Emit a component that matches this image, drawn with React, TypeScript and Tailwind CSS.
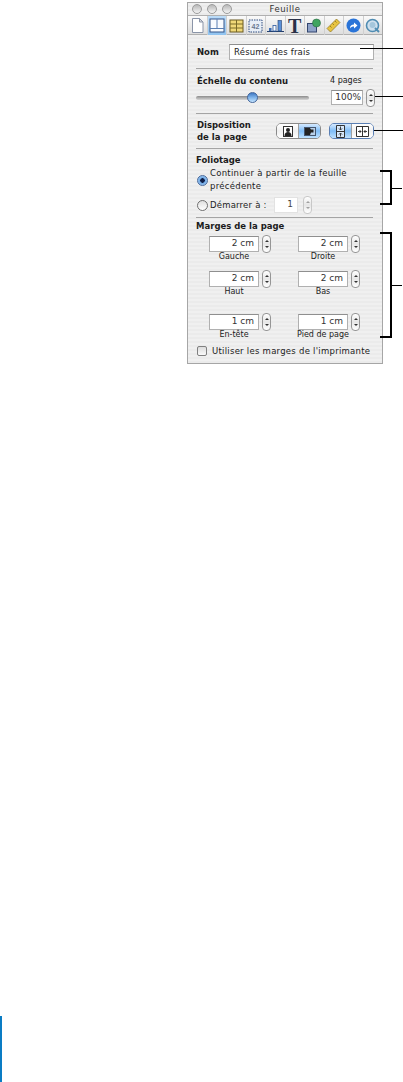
import React from "react";

const stripes =
  "bg-[repeating-linear-gradient(180deg,#f0f0f0_0px,#f0f0f0_2px,#ebebeb_2px,#ebebeb_4px)]";

function Sep() {
  return <div className="h-px w-[177px] bg-[#a4a4a4]" />;
}

function Stepper({ faded = false, className = "" }: { faded?: boolean; className?: string }) {
  const c = faded ? "#a0a0a0" : "#333333";
  return (
    <div
      className={`flex h-[18px] w-[9px] shrink-0 flex-col items-center justify-center gap-[4px] rounded-[4px] border bg-gradient-to-b from-[#ffffff] via-[#e6e6e6] to-[#ffffff] ${
        faded ? "border-[#c8c8c8]" : "border-[#969696]"
      } ${className}`}
    >
      <svg width="4" height="2" viewBox="0 0 4 2"><path d="M2 0L4 2H0z" fill={c} /></svg>
      <svg width="4" height="2" viewBox="0 0 4 2"><path d="M0 0h4L2 2z" fill={c} /></svg>
    </div>
  );
}

function Field({ value, className = "" }: { value: string; className?: string }) {
  return (
    <div
      className={`flex items-center justify-end border border-[#b0b0b0] border-t-[#8f8f8f] bg-white pr-[4px] text-[9px] text-[#333] ${className}`}
    >
      {value}
    </div>
  );
}

function Margin({ value, label }: { value: string; label: string }) {
  return (
    <div className="grid grid-cols-[50px_9px] items-center gap-x-[3px]">
      <Field value={value} className="h-[16px] w-[50px]" />
      <Stepper />
      <div className="mt-[-1px] flex h-[10px] w-[50px] justify-center text-[8px] leading-[10px] whitespace-nowrap text-[#222]">
        {label}
      </div>
    </div>
  );
}

function Cell({ children, active = false }: { children: React.ReactNode; active?: boolean }) {
  return (
    <div
      className={`flex h-[19px] w-[19.5px] items-center justify-center border-r border-[#cfcfcf] ${
        active ? "bg-gradient-to-b from-[#bcdcf8] to-[#8fc3f0]" : ""
      }`}
    >
      {children}
    </div>
  );
}

function Seg({ children, active = false, border = false }: { children: React.ReactNode; active?: boolean; border?: boolean }) {
  return (
    <div
      className={`flex h-full flex-1 items-center justify-center ${border ? "border-r border-[#a0a0a0]" : ""} ${
        active
          ? "bg-gradient-to-b from-[#d4e9ff] via-[#7fbcf6] to-[#bfe2ff]"
          : "bg-gradient-to-b from-[#ffffff] via-[#f0f0f0] to-[#ffffff]"
      }`}
    >
      {children}
    </div>
  );
}

function Light() {
  return (
    <div className="h-[10px] w-[10px] rounded-full border border-[#9c9c9c] bg-gradient-to-b from-[#b8b8b8] to-[#f4f4f4]" />
  );
}

function Bracket({ className }: { className: string }) {
  return (
    <div className={`absolute left-[380px] w-[12px] border-y-2 border-r-2 border-black ${className}`}>
      <div className="absolute top-1/2 left-[11px] h-px w-[11px] bg-black" />
    </div>
  );
}

export default function App() {
  return (
    <div className="relative h-[1082px] w-[403px] overflow-hidden bg-white pt-[2px] pl-[187px] font-['DejaVu_Sans',sans-serif] text-[8.5px] text-[#1c1c1c]">
      <div className="flex w-[196px] flex-col border border-[#a6a6a6]">
        <div className={`relative flex h-[12px] items-center justify-center ${stripes}`}>
          <div className="absolute top-[1px] left-[4px] flex gap-[5px]">
            <Light />
            <Light />
            <Light />
          </div>
          <span className="text-[8.5px] leading-none tracking-[.5px] text-[#333]">Feuille</span>
        </div>
        <div className="flex h-[20px] border-y border-[#b0b0b0] bg-gradient-to-b from-[#fafafa] to-[#dedede] leading-none">
          <Cell>
            <svg width="15" height="17" viewBox="0 0 15 17">
              <path d="M2.5 1.5h7l3.5 3.5v10.500h-10.500z" fill="#fff" stroke="#8b95a8" />
              <path d="M9.500 1.500v3.500h3.500z" fill="#d5d8de" stroke="#8b95a8" />
            </svg>
          </Cell>
          <Cell active>
            <svg width="16" height="15" viewBox="0 0 16 15">
              <rect x="1" y="1" width="14" height="13" fill="#f8fbff" stroke="#34558a" />
              <path d="M1 10.500h14M8 1v9.500" stroke="#5b7fb3" />
            </svg>
          </Cell>
          <Cell>
            <svg width="15" height="14" viewBox="0 0 15 14">
              <rect x="1" y="1" width="13" height="12" fill="#f0d878" stroke="#6a5a20" />
              <path d="M1 5h13M1 9h13M7.500 1v12" stroke="#7a6a28" />
            </svg>
          </Cell>
          <Cell>
            <svg width="15" height="14" viewBox="0 0 15 14">
              <rect x="1" y="1" width="13" height="12" fill="#e8eef6" stroke="#2f4d80" strokeDasharray="1.500 1" />
              <text x="7.500" y="9.500" textAnchor="middle" fontSize="7" fontWeight="700" fontFamily="'Liberation Sans',sans-serif" fill="#6a7890">42</text>
            </svg>
          </Cell>
          <Cell>
            <svg width="17" height="14" viewBox="0 0 17 14">
              <path d="M0 12.500h17" stroke="#24406e" />
              <rect x="2" y="9" width="2.500" height="3" fill="#3c6cb4" />
              <rect x="6" y="6.500" width="3" height="5.500" fill="#fff" stroke="#2c5aa0" strokeWidth=".8" />
              <rect x="11" y="1.500" width="3.500" height="10.500" fill="#5a90d8" stroke="#24406e" strokeWidth=".6" />
            </svg>
          </Cell>
          <Cell>
            <span className="font-['Liberation_Serif',serif] text-[20px] leading-none font-bold text-[#2a3148]">T</span>
          </Cell>
          <Cell>
            <svg width="16" height="15" viewBox="0 0 16 15">
              <rect x="1.500" y="5.500" width="9" height="8.500" fill="#8ea2c8" stroke="#32456e" />
              <circle cx="10.500" cy="5" r="4" fill="#3fa560" stroke="#2a6a42" strokeWidth=".6" />
            </svg>
          </Cell>
          <Cell>
            <svg width="15" height="15" viewBox="0 0 15 15">
              <path d="M1 10.500L10.500 1l3.500 3.500L4.500 14z" fill="#e8c440" stroke="#8d7420" strokeWidth=".7" />
              <path d="M4 8l1.500 1.500M6.500 5.500L8 7M9 3l1.500 1.500" stroke="#7a6418" strokeWidth=".7" />
            </svg>
          </Cell>
          <Cell>
            <svg width="15" height="15" viewBox="0 0 15 15">
              <circle cx="7.500" cy="7.500" r="7" fill="#2a74d8" />
              <path d="M4 10.500c0-3 1.500-4 4-4V4.500l3.500 3-3.500 3V8.500c-1.800 0-3 .4-4 2z" fill="#fff" />
            </svg>
          </Cell>
          <div className="flex h-[19px] flex-1 items-center justify-center">
            <svg width="16" height="16" viewBox="0 0 16 16">
              <circle cx="7.500" cy="7.500" r="6" fill="#cfe0ee" stroke="#4f8cb2" strokeWidth="1.600" />
              <circle cx="7.500" cy="7" r="3" fill="#a4c6dc" />
              <path d="M10 10l4 4" stroke="#4f8cb2" strokeWidth="2" />
            </svg>
          </div>
        </div>

        <div className={`flex flex-col pb-[7px] pl-[8px] ${stripes}`}>
          <div className="mt-[9px] flex h-[16px] items-center">
            <span className="w-[33px] pl-[1px] font-bold">Nom</span>
            <div className="flex h-[16px] w-[145px] items-center border border-[#b0b0b0] border-t-[#8f8f8f] bg-white pl-[4px] tracking-[.2px] text-[#222]">
              Résumé des frais
            </div>
          </div>
          <div className="mt-[8px]"><Sep /></div>

          <div className="mt-[7px] flex h-[10px] items-center leading-[10px]">
            <span className="w-[134px] pl-[1px] font-bold whitespace-nowrap">Échelle du contenu</span>
            <span className="text-[8px] whitespace-nowrap">4 pages</span>
          </div>
          <div className="mt-[4px] flex h-[15px] items-center">
            <div className="relative h-[4px] w-[113px] rounded-full bg-gradient-to-b from-[#8c8c8c] to-[#d8d8d8]">
              <div className="absolute top-[-3.500px] left-[51px] h-[11px] w-[11px] rounded-full border border-[#44679c] bg-gradient-to-b from-[#3f78c4] via-[#7fb4ea] to-[#c4e4ff]" />
            </div>
            <Field value="100%" className="ml-[22px] h-[15px] w-[32px] !pr-[1px]" />
            <Stepper className="ml-[3px]" />
          </div>
          <div className="mt-[8px]"><Sep /></div>

          <div className="mt-[5px] flex h-[24px] items-center">
            <div className="w-[80px] pl-[1px] leading-[12px] font-bold">
              Disposition
              <br />
              de la page
            </div>
            <div className="flex h-[16px] w-[45px] overflow-hidden rounded-[5px] border border-[#8a8a8a]">
              <Seg border>
                <svg width="10" height="11" viewBox="0 0 10 11">
                  <rect x=".5" y=".5" width="9" height="10" fill="#fff" stroke="#333" />
                  <circle cx="5" cy="4" r="2" fill="#222" />
                  <path d="M1.500 10c0-3 1.500-4 3.500-4s3.500 1 3.500 4z" fill="#222" />
                </svg>
              </Seg>
              <Seg active>
                <svg width="12" height="9" viewBox="0 0 12 9">
                  <rect x=".5" y=".5" width="11" height="8" fill="#b8d0ea" stroke="#45566e" />
                  <path d="M1 1h5l1 1.500h2.500v3H7l-1 2.500H1z" fill="#222" />
                </svg>
              </Seg>
            </div>
            <div className="ml-[8px] flex h-[16px] w-[45px] overflow-hidden rounded-[5px] border border-[#5a7fb4]">
              <Seg active border>
                <svg width="11" height="13" viewBox="0 0 11 13">
                  <path d="M1.500.5h8v12h-8zM1.500 6.500h8" fill="#d8e8fa" stroke="#333" />
                  <path d="M5.500 1.500v3M4 3.500l1.500 1.500L7 3.500M5.500 11.500v-3M4 9.500L5.500 8 7 9.500" fill="none" stroke="#111" strokeWidth=".8" />
                </svg>
              </Seg>
              <Seg>
                <svg width="13" height="11" viewBox="0 0 13 11">
                  <path d="M.5.500h12v10H.5zM6.500.5v10" fill="#fff" stroke="#333" />
                  <path d="M2 5.500h3M3.500 4L5 5.500 3.500 7M11 5.500H8M9.500 4L8 5.500 9.500 7" fill="none" stroke="#111" strokeWidth=".8" />
                </svg>
              </Seg>
            </div>
          </div>
          <div className="mt-[5px]"><Sep /></div>

          <div className="mt-[6px] h-[10px] leading-[10px] font-bold">Foliotage</div>
          <div className="mt-[2px] flex h-[26px] items-center">
            <div className="ml-[1px] h-[11px] w-[11px] shrink-0 rounded-full border border-[#4a6a9c] bg-[radial-gradient(circle,#10204a_0px,#10204a_2px,#6fa8e4_2.500px,#b4d8fa_100%)]" />
            <div className="ml-[2px] leading-[13px] tracking-[.28px] whitespace-nowrap">
              Continuer à partir de la feuille
              <br />
              précédente
            </div>
          </div>
          <div className="mt-[4px] flex h-[16px] items-center">
            <div className="ml-[1px] h-[11px] w-[11px] shrink-0 rounded-full border border-[#707070] bg-gradient-to-b from-[#e0e0e0] to-[#ffffff]" />
            <span className="ml-[2px] w-[64px] tracking-[.2px] whitespace-nowrap">Démarrer à :</span>
            <div className="flex h-[16px] w-[24px] items-center justify-end border border-[#e2e2e2] bg-white pr-[4px] text-[9px] text-[#444]">1</div>
            <Stepper faded className="ml-[5px]" />
          </div>
          <div className="mt-[4px]"><Sep /></div>

          <div className="mt-[3px] h-[10px] leading-[10px] font-bold">Marges de la page</div>
          <div className="mt-[4px] ml-[13px] grid w-[151px] grid-cols-[62px_62px] gap-x-[27px]">
            <Margin value="2 cm" label="Gauche" />
            <Margin value="2 cm" label="Droite" />
          </div>
          <div className="mt-[8px] ml-[13px] grid w-[151px] grid-cols-[62px_62px] gap-x-[27px]">
            <Margin value="2 cm" label="Haut" />
            <Margin value="2 cm" label="Bas" />
          </div>
          <div className="mt-[16px] ml-[13px] grid w-[151px] grid-cols-[62px_62px] gap-x-[27px]">
            <Margin value="1 cm" label="En-tête" />
            <Margin value="1 cm" label="Pied de page" />
          </div>
          <div className="mt-[6px] flex h-[10px] items-center pl-[1px]">
            <div className="h-[10px] w-[10px] rounded-[2px] border border-[#808080] bg-gradient-to-b from-[#dcdcdc] to-[#fafafa]" />
            <span className="ml-[5px] tracking-[.26px] whitespace-nowrap">Utiliser les marges de l'imprimante</span>
          </div>
        </div>
      </div>

      <div className="absolute top-[48px] left-[360px] h-px w-[43px] bg-black" />
      <div className="absolute top-[96px] left-[375px] h-px w-[28px] bg-black" />
      <div className="absolute top-[130px] left-[374px] h-px w-[29px] bg-black" />
      <Bracket className="top-[170px] h-[35px]" />
      <Bracket className="top-[232px] h-[106px]" />
      <div className="absolute bottom-0 left-0 h-[66px] w-[2px] bg-[#0a7cc4]" />
    </div>
  );
}
